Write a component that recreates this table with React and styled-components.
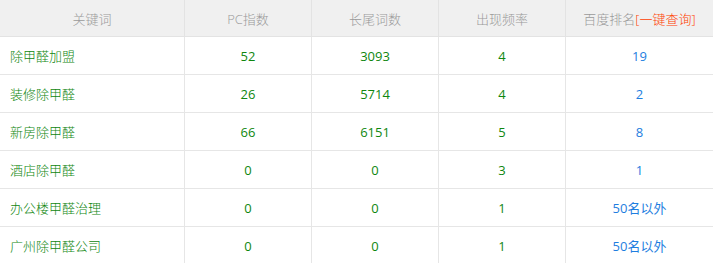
import React from "react";
import styled, { createGlobalStyle } from "styled-components";

const Global = createGlobalStyle`
  html, body { margin: 0; padding: 0; background: #fff; }
  body { font-family: "Open Sans", "Noto Sans CJK SC", sans-serif; }
`;

const Table = styled.div`
  display: grid;
  grid-template-columns: 185px 127px 127px 127px 1fr;
  width: 713px;
  font-size: 13px;
`;

const HeadCell = styled.div`
  height: 36px;
  display: flex;
  align-items: center;
  justify-content: center;
  background: #f0f0f0;
  color: #9a9a9a;
  font-weight: 300;
  border-bottom: 1px solid #e3e3e3;
  border-right: ${(p) => (p.$last ? "none" : "1px solid #e3e3e3")};
`;

const Cell = styled.div`
  height: 37px;
  display: flex;
  align-items: center;
  justify-content: ${(p) => (p.$left ? "flex-start" : "center")};
  padding-left: ${(p) => (p.$left ? "10px" : "0")};
  font-weight: ${(p) => (p.$left ? 300 : 400)};
  color: ${(p) => (p.$blue ? "#1e7ee0" : "#0f870f")};
  border-bottom: 1px solid #e6e6e6;
  border-right: ${(p) => (p.$last ? "none" : "1px solid #e6e6e6")};
`;

const Query = styled.span`
  color: #ff3f00;
`;

const rows = [
  ["除甲醛加盟", "52", "3093", "4", "19"],
  ["装修除甲醛", "26", "5714", "4", "2"],
  ["新房除甲醛", "66", "6151", "5", "8"],
  ["酒店除甲醛", "0", "0", "3", "1"],
  ["办公楼甲醛治理", "0", "0", "1", "50名以外"],
  ["广州除甲醛公司", "0", "0", "1", "50名以外"],
];

export default function App() {
  return (
    <>
      <Global />
      <Table>
        <HeadCell>关键词</HeadCell>
        <HeadCell>PC指数</HeadCell>
        <HeadCell>长尾词数</HeadCell>
        <HeadCell>出现频率</HeadCell>
        <HeadCell $last>
          百度排名<Query>[一键查询]</Query>
        </HeadCell>
        {rows.map((r) => (
          <React.Fragment key={r[0]}>
            <Cell $left>{r[0]}</Cell>
            <Cell>{r[1]}</Cell>
            <Cell>{r[2]}</Cell>
            <Cell>{r[3]}</Cell>
            <Cell $blue $last>{r[4]}</Cell>
          </React.Fragment>
        ))}
      </Table>
    </>
  );
}
